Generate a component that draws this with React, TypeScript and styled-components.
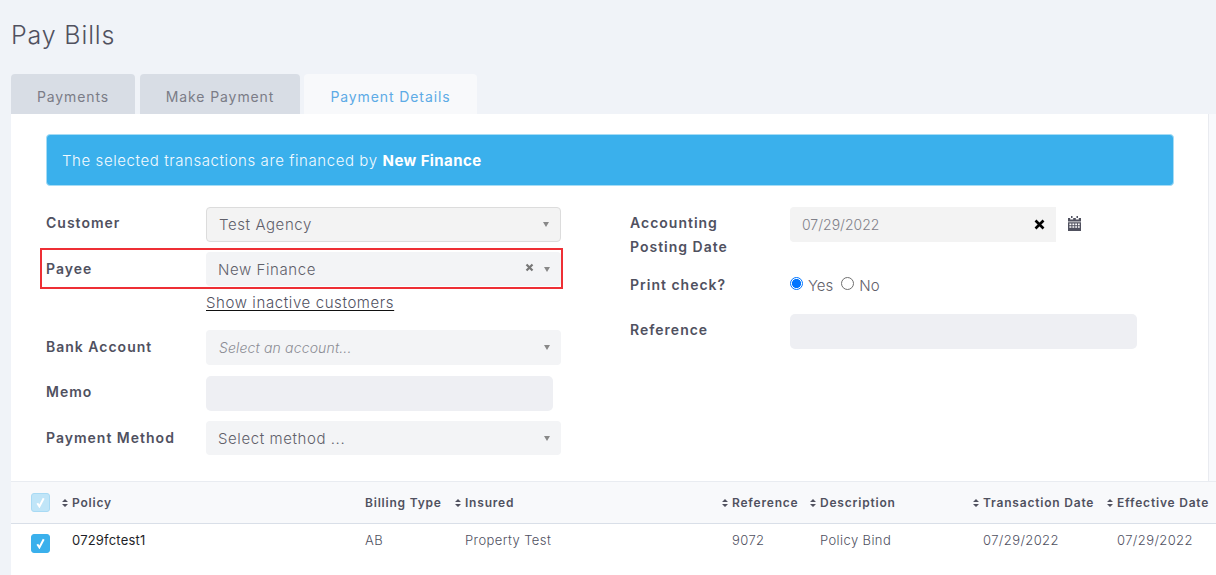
import React from 'react';
import styled, { createGlobalStyle } from 'styled-components';

const GlobalStyle = createGlobalStyle`
  html, body {
    margin: 0;
    padding: 0;
    background: #f0f3f8;
    overflow: hidden;
  }
  * {
    box-sizing: border-box;
  }
  body {
    font-family: "Inter", "Liberation Sans", sans-serif;
    color: #50515f;
  }
`;

const Page = styled.div`
  width: 1216px;
  height: 575px;
  padding-left: 11px;
  overflow: hidden;
`;

const Title = styled.h1`
  margin: 0;
  padding-top: 19px;
  height: 74px;
  font-size: 25px;
  line-height: 32px;
  font-weight: 300;
  color: #50515f;
  letter-spacing: 0.85px;
`;

const Tabs = styled.div`
  display: flex;
  height: 40px;
`;

const Tab = styled.div<{ $active?: boolean; $width: number; $gap: number }>`
  width: ${p => p.$width}px;
  margin-right: ${p => p.$gap}px;
  display: flex;
  align-items: center;
  justify-content: center;
  padding-top: 4px;
  font-size: 14px;
  letter-spacing: 0.9px;
  border-radius: 4px 4px 0 0;
  background: ${p => (p.$active ? '#f8f9fb' : '#d8dde5')};
  color: ${p => (p.$active ? '#5dabe6' : '#7b7c87')};
`;

const Panel = styled.div`
  background: #f8f9fc;
  height: 461px;
`;

const FormArea = styled.div`
  width: 1198px;
  height: 367px;
  padding: 20px 35px 0;
  background: #fff;
  border-right: 1px solid #e9ebf0;
`;

const Alert = styled.div`
  width: 1128px;
  height: 52px;
  display: flex;
  align-items: center;
  gap: 5px;
  padding-left: 15px;
  background: #3ab0ec;
  border: 1px solid #a5dcf5;
  border-radius: 4px;
  color: #f2faff;
  font-size: 15px;
  font-weight: 300;
  letter-spacing: 0.58px;
  b {
    font-weight: 700;
    letter-spacing: 0.4px;
    color: #fff;
  }
`;

const Columns = styled.div`
  display: flex;
  padding-top: 21px;
`;

const LeftColumn = styled.div`
  width: 584px;
  display: flex;
  flex-direction: column;
`;

const RightColumn = styled.div`
  display: flex;
  flex-direction: column;
`;

const Row = styled.div<{ $height: number }>`
  display: flex;
  height: ${p => p.$height}px;
`;

const Label = styled.label<{ $top?: number }>`
  width: 160px;
  flex: none;
  padding-top: ${p => p.$top ?? 4}px;
  font-size: 14px;
  line-height: 24px;
  font-weight: 600;
  letter-spacing: 1px;
  color: #50515f;
`;

const SelectBox = styled.div<{ $bordered?: boolean; $height?: number }>`
  width: 355px;
  height: ${p => p.$height ?? 34}px;
  display: flex;
  align-items: center;
  padding: 0 12px;
  background: ${p => (p.$bordered ? '#f3f3f3' : '#f3f4f6')};
  border: ${p => (p.$bordered ? '1px solid #dcdcdc' : 'none')};
  border-radius: 4px;
  color: #6f7079;
`;

const SelectText = styled.span<{ $placeholder?: boolean }>`
  flex: 1;
  font-size: ${p => (p.$placeholder ? 14 : 15)}px;
  font-weight: 300;
  font-style: ${p => (p.$placeholder ? 'italic' : 'normal')};
  letter-spacing: ${p => (p.$placeholder ? 0.15 : 0.58)}px;
  padding-left: ${p => (p.$placeholder ? 1 : 0)}px;
  color: ${p => (p.$placeholder ? '#8b8c94' : '#5f606a')};
`;

const Caret = styled.span`
  width: 0;
  height: 0;
  margin-right: -1px;
  border-left: 3px solid transparent;
  border-right: 3px solid transparent;
  border-top: 5px solid #888;
`;

const ClearMark = styled.svg`
  width: 9px;
  height: 9px;
  margin-right: 10px;
  margin-top: -4px;
`;

const Highlighted = styled.div`
  width: 523px;
  height: 41px;
  margin: -4px 0 0 -6px;
  padding: 2px 0 0 4px;
  display: flex;
  border: 2px solid #ee2f35;
`;

const InactiveLink = styled.a`
  display: block;
  align-self: flex-start;
  width: fit-content;
  margin: 4px 0 0 160px;
  font-size: 15px;
  font-weight: 300;
  line-height: 20px;
  letter-spacing: 0.6px;
  color: #50515f;
  text-decoration: underline;
  text-decoration-color: #111;
  text-underline-offset: 2px;
`;

const TextField = styled.div<{ $width: number }>`
  width: ${p => p.$width}px;
  height: 35px;
  background: #eeeff3;
  border-radius: 5px;
`;

const DateField = styled.div`
  width: 266px;
  height: 35px;
  display: flex;
  align-items: center;
  justify-content: space-between;
  padding: 0 11px 0 12px;
  background: #f3f3f3;
  border-radius: 4px 0 0 4px;
  font-size: 14px;
  font-weight: 300;
  color: #7f8089;
`;

const CloseMark = styled.svg`
  width: 11px;
  height: 11px;
`;

const CalendarIcon = styled.svg`
  width: 13px;
  height: 15px;
  margin: 9px 0 0 12px;
`;

const RadioGroup = styled.div`
  display: flex;
  align-items: flex-start;
  padding-top: 7px;
  font-size: 15px;
  font-weight: 300;
  line-height: 20px;
  color: #5f606a;
`;

const Radio = styled.span<{ $checked?: boolean }>`
  width: 13px;
  height: 13px;
  margin: 1px 5px 0 0;
  border-radius: 50%;
  border: ${p => (p.$checked ? '1px solid #0075ff' : '1px solid #6f6f6f')};
  background: ${p => (p.$checked ? 'radial-gradient(circle, #0075ff 0 4.4px, #fff 4.6px)' : '#fff')};
`;

const RadioText = styled.span`
  margin-right: 8px;
`;

const Table = styled.div`
  font-size: 13px;
`;

const gridColumns = '41px 293px 100px 267px 88px 163px 134px 1fr';

const HeaderRow = styled.div`
  display: grid;
  grid-template-columns: ${gridColumns};
  height: 43px;
  align-items: center;
  background: #f8f9fb;
  border-top: 1px solid #e9ecf1;
  border-bottom: 1px solid #d9dfe8;
  padding-left: 20px;
  font-weight: 600;
  font-size: 12px;
  letter-spacing: 0.8px;
  color: #50515f;
`;

const BodyRow = styled.div`
  display: grid;
  grid-template-columns: ${gridColumns};
  height: 51px;
  padding: 6px 0 0 20px;
  align-items: start;
  background: #fff;
`;

const HeadCell = styled.div<{ $sortable?: boolean }>`
  display: flex;
  align-items: center;
  white-space: nowrap;
  margin-left: ${p => (p.$sortable ? -10 : 0)}px;
`;

const Cell = styled.div<{ $dark?: boolean }>`
  line-height: 20px;
  font-weight: ${p => (p.$dark ? 400 : 300)};
  letter-spacing: ${p => (p.$dark ? 0.2 : 0.4)}px;
  white-space: nowrap;
  color: ${p => (p.$dark ? '#1e1f28' : '#50515f')};
`;

const SortMark = styled.svg`
  width: 6px;
  height: 8px;
  margin-right: 4px;
  flex: none;
`;

const CheckBox = styled.span<{ $faded?: boolean }>`
  width: 19px;
  height: 19px;
  margin-top: ${p => (p.$faded ? 0 : 4)}px;
  display: flex;
  align-items: center;
  justify-content: center;
  border-radius: 3px;
  background: ${p => (p.$faded ? '#c0e5f8' : '#3ab0ec')};
  border: 1px solid ${p => (p.$faded ? '#a8daf4' : '#3ab0ec')};
`;

const CheckMark = styled.svg`
  width: 9px;
  height: 11px;
`;

const Sort = () => (
  <SortMark viewBox="0 0 6 8">
    <path d="M3 0 L6 3 H0 Z M0 5 H6 L3 8 Z" fill="#50515f" />
  </SortMark>
);

const Check = () => (
  <CheckMark viewBox="0 0 9 11">
    <path d="M1.3 6.2 L3.4 9.4 L7.7 1.2" fill="none" stroke="#fff" strokeWidth="2" />
  </CheckMark>
);

const headers: { title: string; sortable: boolean }[] = [
  { title: 'Policy', sortable: true },
  { title: 'Billing Type', sortable: false },
  { title: 'Insured', sortable: true },
  { title: 'Reference', sortable: true },
  { title: 'Description', sortable: true },
  { title: 'Transaction Date', sortable: true },
  { title: 'Effective Date', sortable: true },
];

const App: React.FC = () => {
  return (
    <Page>
      <GlobalStyle />
      <Title>Pay Bills</Title>

      <Tabs>
        <Tab $width={124} $gap={5}>Payments</Tab>
        <Tab $width={160} $gap={4}>Make Payment</Tab>
        <Tab $width={173} $gap={0} $active>Payment Details</Tab>
      </Tabs>

      <Panel>
        <FormArea>
          <Alert>
            The selected transactions are financed by <b>New Finance</b>
          </Alert>

          <Columns>
            <LeftColumn>
              <Row $height={45}>
                <Label>Customer</Label>
                <SelectBox $bordered $height={35}>
                  <SelectText>Test Agency</SelectText>
                  <Caret />
                </SelectBox>
              </Row>

              <Row $height={37}>
                <Highlighted>
                  <Label $top={5}>Payee</Label>
                  <SelectBox>
                    <SelectText>New Finance</SelectText>
                    <ClearMark viewBox="0 0 9 9">
                      <path d="M1.5 1.5 L7.5 7.5 M7.5 1.5 L1.5 7.5" stroke="#777" strokeWidth="2.2" />
                    </ClearMark>
                    <Caret />
                  </SelectBox>
                </Highlighted>
              </Row>

              <Row $height={41}>
                <InactiveLink href="#">Show inactive customers</InactiveLink>
              </Row>

              <Row $height={46}>
                <Label $top={5}>Bank Account</Label>
                <SelectBox $height={35}>
                  <SelectText $placeholder>Select an account...</SelectText>
                  <Caret />
                </SelectBox>
              </Row>

              <Row $height={45}>
                <Label>Memo</Label>
                <TextField $width={347} />
              </Row>

              <Row $height={34}>
                <Label $top={5}>Payment Method</Label>
                <SelectBox>
                  <SelectText>Select method ...</SelectText>
                  <Caret />
                </SelectBox>
              </Row>
            </LeftColumn>

            <RightColumn>
              <Row $height={62}>
                <Label>
                  Accounting
                  <br />
                  Posting Date
                </Label>
                <DateField>
                  07/29/2022
                  <CloseMark viewBox="0 0 11 11">
                    <path d="M1.5 1.5 L9.5 9.5 M9.5 1.5 L1.5 9.5" stroke="#000" strokeWidth="2.6" />
                  </CloseMark>
                </DateField>
                <CalendarIcon viewBox="0 0 13 15">
                  <path
                    fillRule="evenodd"
                    fill="#50515f"
                    d="M3 0h1.5v2H3zM8.5 0H10v2H8.5zM0 2h2.2v1.4h3V2h2.6v1.4h3V2H13v3.5H0zM0 6.3h13V15H0zM1.4 7.6v1.6h2V7.6zM4.4 7.6v1.6h1.9V7.6zM7.2 7.6v1.6h1.9V7.6zM10 7.6v1.6h1.7V7.6zM1.4 10.2v1.6h2v-1.6zM4.4 10.2v1.6h1.9v-1.6zM7.2 10.2v1.6h1.9v-1.6zM10 10.2v1.6h1.7v-1.6z"
                  />
                </CalendarIcon>
              </Row>

              <Row $height={45}>
                <Label>Print check?</Label>
                <RadioGroup>
                  <Radio $checked />
                  <RadioText>Yes</RadioText>
                  <Radio />
                  <RadioText>No</RadioText>
                </RadioGroup>
              </Row>

              <Row $height={35}>
                <Label>Reference</Label>
                <TextField $width={347} />
              </Row>
            </RightColumn>
          </Columns>
        </FormArea>

        <Table>
          <HeaderRow>
            <CheckBox $faded>
              <Check />
            </CheckBox>
            {headers.map(h => (
              <HeadCell key={h.title} $sortable={h.sortable}>
                {h.sortable && <Sort />}
                {h.title}
              </HeadCell>
            ))}
          </HeaderRow>
          <BodyRow>
            <CheckBox>
              <Check />
            </CheckBox>
            <Cell $dark>0729fctest1</Cell>
            <Cell>AB</Cell>
            <Cell>Property Test</Cell>
            <Cell>9072</Cell>
            <Cell>Policy Bind</Cell>
            <Cell>07/29/2022</Cell>
            <Cell>07/29/2022</Cell>
          </BodyRow>
        </Table>
      </Panel>
    </Page>
  );
};

export default App;
